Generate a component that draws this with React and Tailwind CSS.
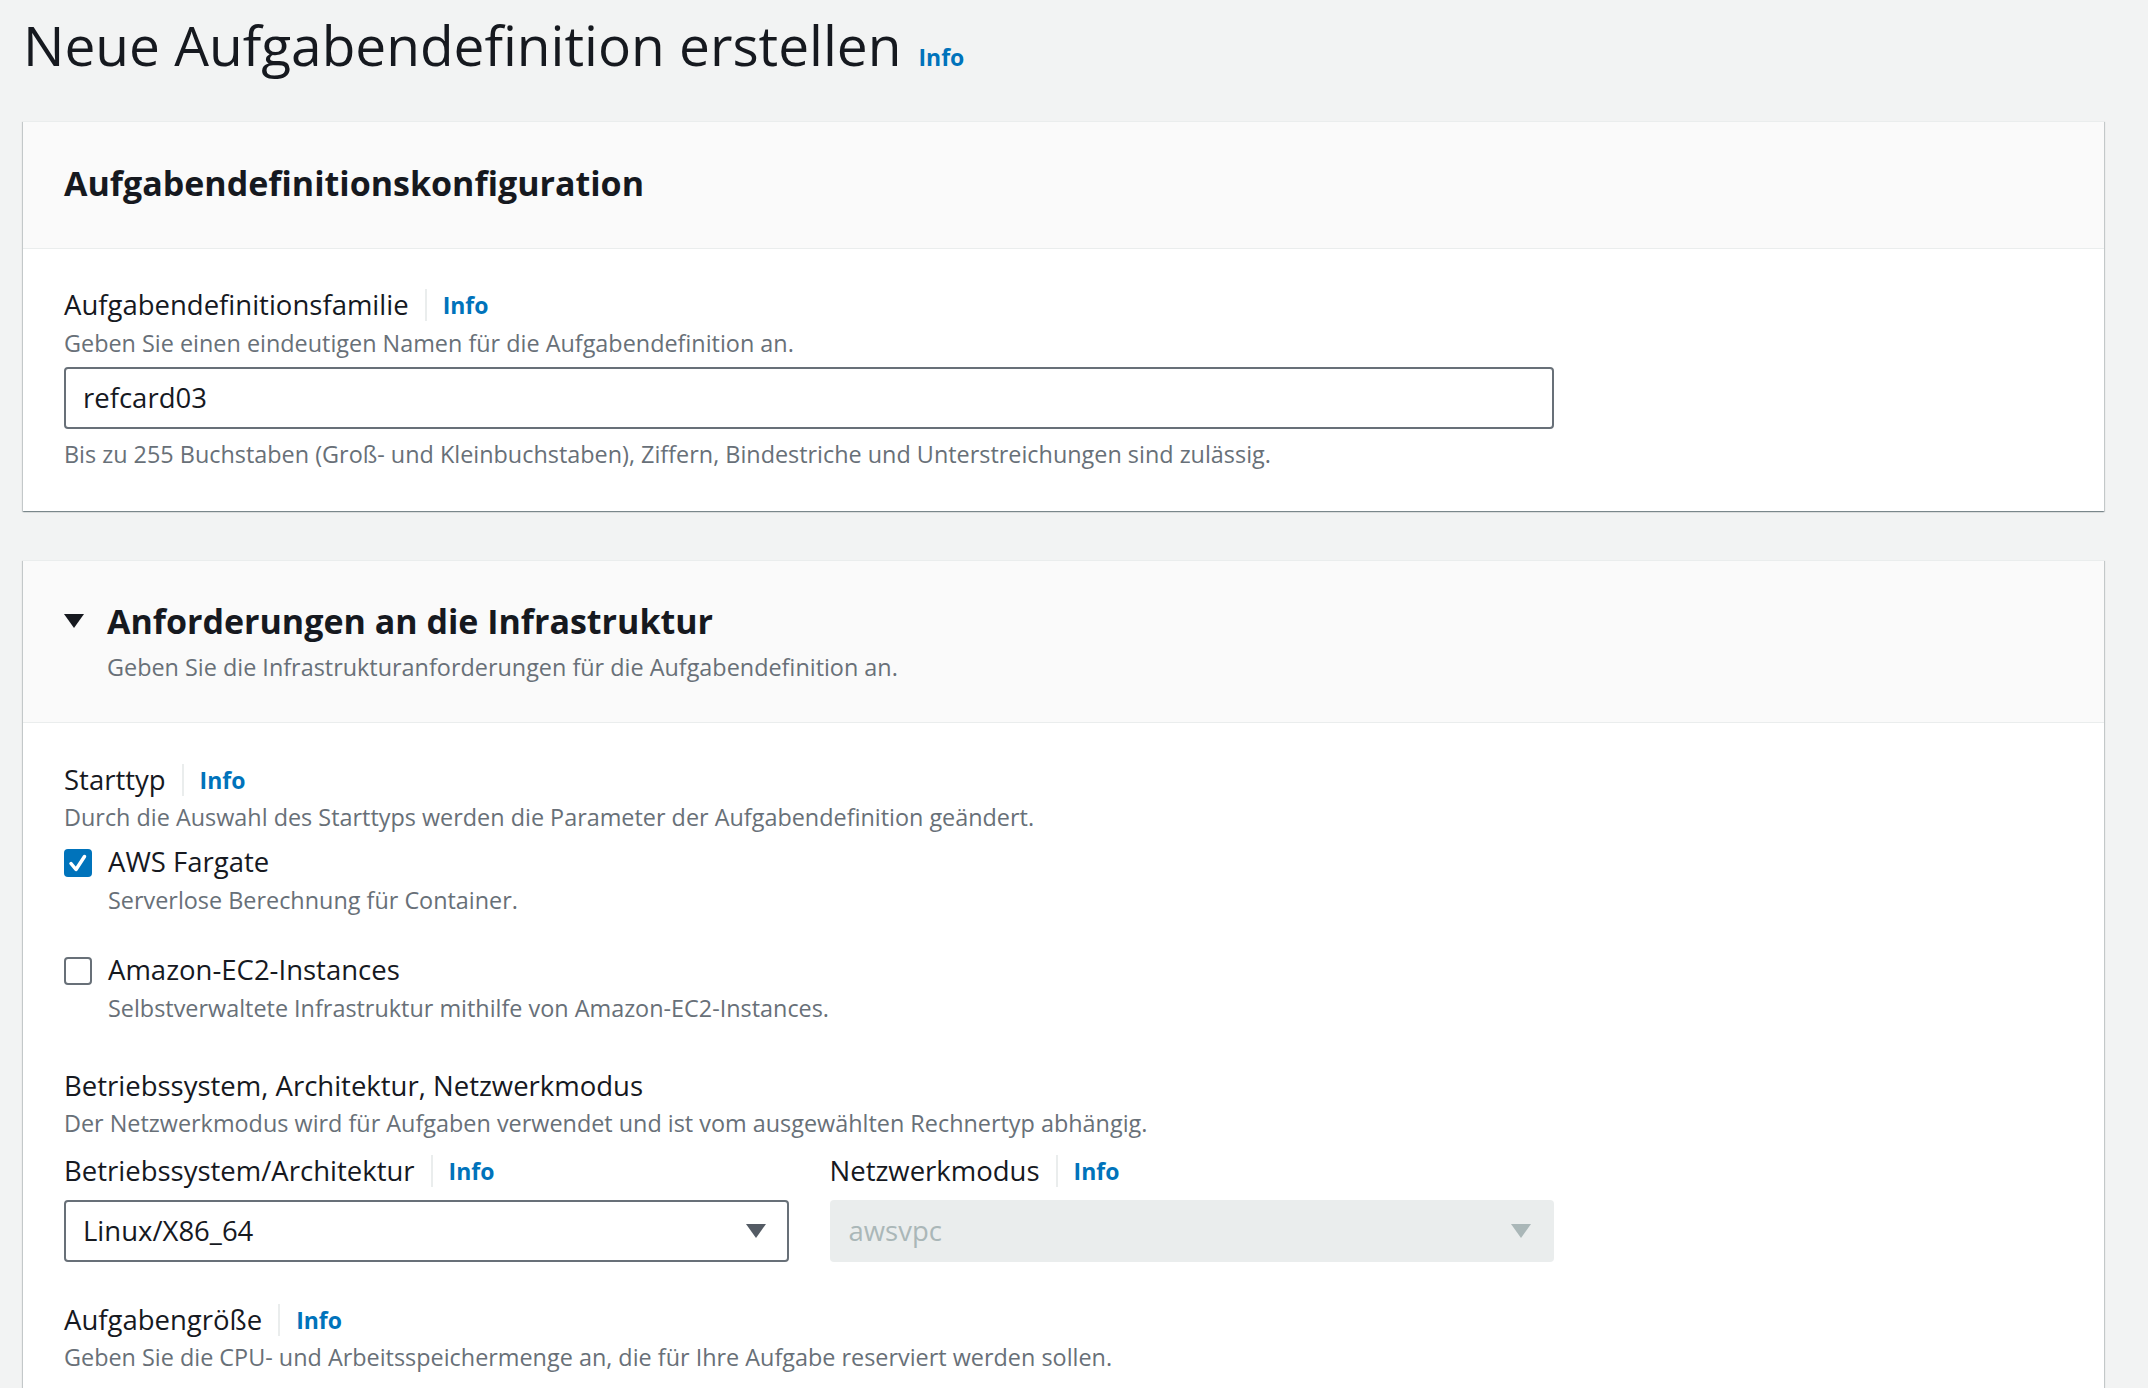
import React from 'react'

function InfoLink() {
    return <span className="text-[23px] font-bold text-[#0073bb] leading-[36px]">Info</span>
}

function FieldLabel({ children, info = true }) {
    return (
        <div className="flex items-center">
            <span className="text-[27.5px] leading-[36px] text-[#16191f]">{children}</span>
            {info && (
                <>
                    <span className="mx-[16px] h-[32px] w-[2px] bg-[#eaeded]" />
                    <InfoLink />
                </>
            )}
        </div>
    )
}

function Hint({ children, className = '' }) {
    return <p className={`text-[23.4px] leading-[32px] text-[#687078] ${className}`}>{children}</p>
}

function Caret({ color }) {
    return (
        <svg width="20" height="14" viewBox="0 0 20 14" className="shrink-0">
            <path d="M0 0 H20 L10 14 Z" fill={color} />
        </svg>
    )
}

function Checkbox({ checked }) {
    if (checked) {
        return (
            <span className="flex h-[28px] w-[28px] shrink-0 items-center justify-center rounded-[4px] bg-[#0073bb]">
                <svg width="28" height="28" viewBox="0 0 28 28">
                    <path d="M7 14.5 L12 20.5 L20.5 7.5" fill="none" stroke="white" strokeWidth="3.5" strokeLinecap="round" strokeLinejoin="round" />
                </svg>
            </span>
        )
    }
    return <span className="block h-[28px] w-[28px] shrink-0 rounded-[4px] border-2 border-[#687078] bg-white" />
}

function Option({ checked, title, desc }) {
    return (
        <div className="flex items-start gap-[16px]">
            <div className="pt-[5px]">
                <Checkbox checked={checked} />
            </div>
            <div>
                <div className="text-[27.5px] leading-[36px] text-[#16191f]">{title}</div>
                <Hint className="mt-[4px]">{desc}</Hint>
            </div>
        </div>
    )
}

function Card({ children }) {
    return (
        <section className="border-t border-[#eaeded] bg-white shadow-[0_1px_1px_0_rgba(0,28,36,0.3),1px_1px_1px_0_rgba(0,28,36,0.15),-1px_1px_1px_0_rgba(0,28,36,0.15)]">
            {children}
        </section>
    )
}

export default function App() {
    return (
        <div className="min-h-screen bg-[#f2f3f3] pt-[15px] pl-[23px] pr-[44px] font-['Open_Sans',sans-serif] text-[#16191f]">
            {/* Page title */}
            <div className="flex items-baseline gap-[17px]">
                <h1 className="text-[55px] leading-[60px] font-normal">Neue Aufgabendefinition erstellen</h1>
                <InfoLink />
            </div>

            {/* Konfiguration */}
            <div className="mt-[46px]">
                <Card>
                    <div className="border-b border-[#eaeded] bg-[#fafafa] px-[41px] pt-[41px] pb-[45px]">
                        <h2 className="text-[34px] font-bold leading-[40px]">Aufgabendefinitionskonfiguration</h2>
                    </div>
                    <div className="px-[41px] pt-[38px] pb-[41px]">
                        <FieldLabel>Aufgabendefinitionsfamilie</FieldLabel>
                        <Hint className="mt-[4px]">Geben Sie einen eindeutigen Namen für die Aufgabendefinition an.</Hint>
                        <div className="mt-[8px] flex h-[62px] w-[1490px] items-center rounded-[4px] border-2 border-[#687078] px-[17px] text-[27.5px]">
                            refcard03
                        </div>
                        <Hint className="mt-[9px]">
                            Bis zu 255 Buchstaben (Groß- und Kleinbuchstaben), Ziffern, Bindestriche und Unterstreichungen sind zulässig.
                        </Hint>
                    </div>
                </Card>
            </div>

            {/* Infrastruktur */}
            <div className="mt-[49px]">
                <Card>
                    <div className="border-b border-[#eaeded] bg-[#fafafa] px-[41px] pt-[40px] pb-[39px]">
                        <div className="flex items-center gap-[23px]">
                            <Caret color="#16191f" />
                            <h2 className="text-[34px] font-bold leading-[40px]">Anforderungen an die Infrastruktur</h2>
                        </div>
                        <Hint className="mt-[10px] pl-[43px]">Geben Sie die Infrastrukturanforderungen für die Aufgabendefinition an.</Hint>
                    </div>
                    <div className="px-[41px] pt-[39px] pb-[60px]">
                        <FieldLabel>Starttyp</FieldLabel>
                        <Hint className="mt-[3px]">Durch die Auswahl des Starttyps werden die Parameter der Aufgabendefinition geändert.</Hint>

                        <div className="mt-[11px] flex flex-col gap-[36px]">
                            <Option checked title="AWS Fargate" desc="Serverlose Berechnung für Container." />
                            <Option checked={false} title="Amazon-EC2-Instances" desc="Selbstverwaltete Infrastruktur mithilfe von Amazon-EC2-Instances." />
                        </div>

                        <div className="mt-[44px]">
                            <FieldLabel info={false}>Betriebssystem, Architektur, Netzwerkmodus</FieldLabel>
                            <Hint className="mt-[3px]">Der Netzwerkmodus wird für Aufgaben verwendet und ist vom ausgewählten Rechnertyp abhängig.</Hint>
                        </div>

                        <div className="mt-[14px] grid w-[1490px] grid-cols-2 gap-x-[41px]">
                            <div>
                                <FieldLabel>Betriebssystem/Architektur</FieldLabel>
                                <div className="mt-[11px] flex h-[62px] items-center justify-between rounded-[4px] border-2 border-[#687078] bg-white pl-[17px] pr-[21px] text-[27.5px]">
                                    <span>Linux/X86_64</span>
                                    <Caret color="#545b64" />
                                </div>
                            </div>
                            <div>
                                <FieldLabel>Netzwerkmodus</FieldLabel>
                                <div className="mt-[11px] flex h-[62px] items-center justify-between rounded-[4px] bg-[#eaeded] pl-[19px] pr-[23px] text-[27.5px] text-[#aab7b8]">
                                    <span>awsvpc</span>
                                    <Caret color="#aab7b8" />
                                </div>
                            </div>
                        </div>

                        <div className="mt-[40px]">
                            <FieldLabel>Aufgabengröße</FieldLabel>
                            <Hint className="mt-[3px]">Geben Sie die CPU- und Arbeitsspeichermenge an, die für Ihre Aufgabe reserviert werden sollen.</Hint>
                        </div>
                    </div>
                </Card>
            </div>
        </div>
    )
}
